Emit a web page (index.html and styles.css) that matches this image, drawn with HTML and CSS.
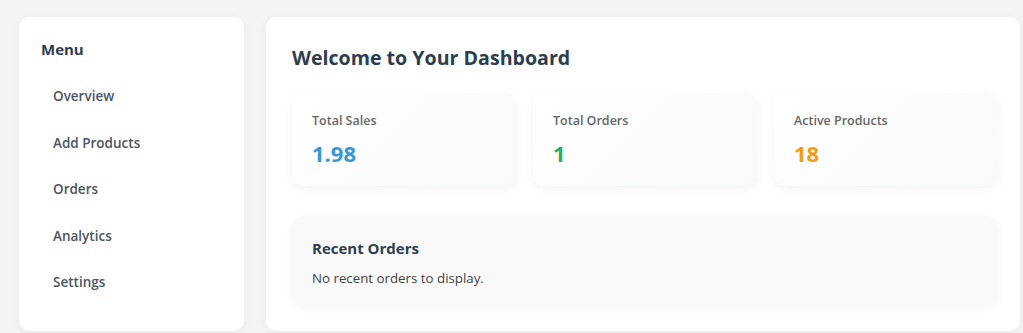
FILE: index.html
```html
<!DOCTYPE html>
<html lang="en">
<head>
    <meta charset="UTF-8">
    <meta name="viewport" content="width=device-width, initial-scale=1.0">
    <title>Dashboard</title>
    <link rel="stylesheet" href="styles.css">
</head>
<body>
    <div class="layout">
        <aside class="sidebar">
            <h3>Menu</h3>
            <ul class="menu">
                <li><a href="#">Overview</a></li>
                <li><a href="#">Add Products</a></li>
                <li><a href="#">Orders</a></li>
                <li><a href="#">Analytics</a></li>
                <li><a href="#">Settings</a></li>
            </ul>
        </aside>

        <main class="content">
            <h2>Welcome to Your Dashboard</h2>

            <div class="stats">
                <div class="stat-card">
                    <h4>Total Sales</h4>
                    <p class="value sales">1.98</p>
                </div>
                <div class="stat-card">
                    <h4>Total Orders</h4>
                    <p class="value orders">1</p>
                </div>
                <div class="stat-card">
                    <h4>Active Products</h4>
                    <p class="value products">18</p>
                </div>
            </div>

            <div class="recent">
                <h3>Recent Orders</h3>
                <p>No recent orders to display.</p>
            </div>
        </main>
    </div>
</body>
</html>
```

FILE: styles.css
```css
body {
    font-family: "Open Sans", "Noto Sans", sans-serif;
    margin: 0;
    padding: 0;
    background-color: #f3f4f6;
    color: #2c3e50;
}

.layout {
    display: flex;
    gap: 22px;
    height: 100vh;
    box-sizing: border-box;
    padding: 17px 3px 2px 19px;
}

.sidebar {
    width: 225px;
    flex-shrink: 0;
    background-color: #fff;
    border-radius: 10px;
    box-shadow: 0 2px 8px rgba(0, 0, 0, 0.05);
    padding: 22px 22px;
    box-sizing: border-box;
}

.sidebar h3 {
    margin: 0 0 14px;
    font-size: 15px;
    font-weight: 700;
    line-height: 20px;
    color: #2c3e50;
}

.menu {
    list-style: none;
    margin: 0;
    padding: 0;
}

.menu li a {
    display: block;
    padding: 12px 12px;
    line-height: 22.5px;
    font-size: 13.5px;
    font-weight: 600;
    color: #4b5563;
    text-decoration: none;
}

.content {
    flex: 1;
    background-color: #fff;
    border-radius: 10px;
    box-shadow: 0 2px 8px rgba(0, 0, 0, 0.05);
    padding: 28px 22px 25px 26px;
    box-sizing: border-box;
}

.content h2 {
    margin: 0 0 22px;
    font-size: 19.6px;
    line-height: 26px;
    font-weight: 700;
    color: #2c3e50;
}

.stats {
    display: grid;
    grid-template-columns: repeat(3, 1fr);
    gap: 17px;
}

.stat-card {
    height: 93px;
    box-sizing: border-box;
    padding: 19px 20px;
    border-radius: 10px;
    background: linear-gradient(135deg, #ffffff, #f8f9fb);
    box-shadow: 0 3px 10px rgba(0, 0, 0, 0.05);
}

.stat-card h4 {
    margin: 0 0 9px;
    font-size: 12.5px;
    line-height: 18px;
    font-weight: 600;
    color: #666;
}

.value {
    margin: 0;
    font-size: 22px;
    line-height: 28px;
    font-weight: 700;
}

.value.sales {
    color: #3498db;
}

.value.orders {
    color: #27ae60;
}

.value.products {
    color: #f39c12;
}

.recent {
    margin-top: 30px;
    height: 90px;
    box-sizing: border-box;
    padding: 21px 20px;
    border-radius: 10px;
    background-color: #f9f9f9;
    box-shadow: 0 2px 8px rgba(0, 0, 0, 0.04);
}

.recent h3 {
    margin: 0 0 9px;
    font-size: 15px;
    line-height: 22px;
    font-weight: 700;
    color: #2c3e50;
}

.recent p {
    margin: 0;
    font-size: 13.3px;
    line-height: 20px;
    color: #444;
}
```
